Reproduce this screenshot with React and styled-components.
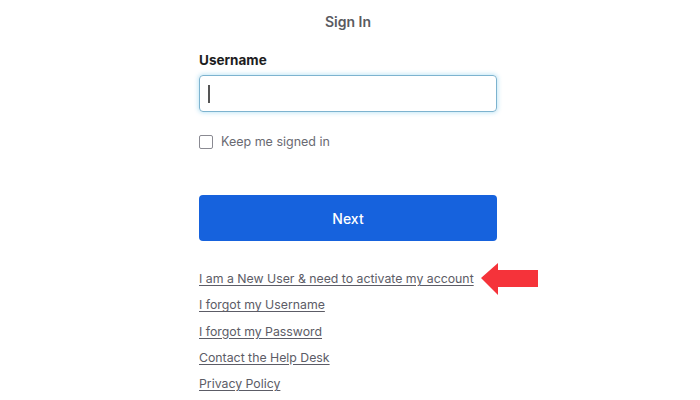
import React from "react";
import styled, { createGlobalStyle } from "styled-components";

const Global = createGlobalStyle`
  html, body { margin: 0; padding: 0; background: #fff; }
  body { font-family: Inter, "Noto Sans", Arial, sans-serif; width: 700px; height: 400px; overflow: hidden; }
`;

const Page = styled.div`
  display: flex;
  justify-content: center;
  padding-right: 4px;
`;

const Form = styled.div`
  width: 298px;
  display: flex;
  flex-direction: column;
`;

const Title = styled.h1`
  margin: 13px 0 0;
  font-size: 14px;
  font-weight: 600;
  color: #5a5a60;
  text-align: center;
  line-height: 18px;
`;

const Label = styled.label`
  margin-top: 21px;
  font-size: 13.5px;
  font-weight: 700;
  color: #1d1d21;
  line-height: 17px;
`;

const InputBox = styled.div`
  margin-top: 6px;
  height: 37px;
  box-sizing: border-box;
  border: 1px solid #7db3cf;
  border-radius: 4px;
  box-shadow: 0 0 4px 1px rgba(120, 200, 235, 0.45);
  display: flex;
  align-items: center;
  padding-left: 8px;
`;

const Caret = styled.span`
  width: 1.5px;
  height: 18px;
  background: #555;
`;

const CheckRow = styled.div`
  margin-top: 22px;
  display: flex;
  align-items: center;
  gap: 8px;
`;

const Box = styled.span`
  width: 14px;
  height: 14px;
  box-sizing: border-box;
  border: 1px solid #8a8a92;
  border-radius: 2px;
`;

const CheckText = styled.span`
  font-size: 12.5px;
  color: #6a6a72;
`;

const Button = styled.button`
  margin-top: 46px;
  height: 46px;
  border: none;
  border-radius: 4px;
  background: #1662dd;
  color: #fff;
  font-family: inherit;
  font-size: 14px;
  font-weight: 500;
`;

const Links = styled.div`
  margin-top: 29px;
  display: flex;
  flex-direction: column;
  gap: 9.25px;
`;

const LinkRow = styled.div`
  position: relative;
  height: 17px;
  display: flex;
  align-items: center;
`;

const Link = styled.a`
  font-size: 12.3px;
  color: #5c5c66;
  text-decoration: underline;
  text-underline-offset: 2px;
  line-height: 17px;
`;

const Arrow = styled.svg`
  position: absolute;
  left: 282px;
  top: -7px;
`;

export default function App() {
  const links = [
    "I forgot my Username",
    "I forgot my Password",
    "Contact the Help Desk",
    "Privacy Policy",
  ];
  return (
    <>
      <Global />
      <Page>
        <Form>
          <Title>Sign In</Title>
          <Label>Username</Label>
          <InputBox>
            <Caret />
          </InputBox>
          <CheckRow>
            <Box />
            <CheckText>Keep me signed in</CheckText>
          </CheckRow>
          <Button>Next</Button>
          <Links>
            <LinkRow>
              <Link>I am a New User &amp; need to activate my account</Link>
              <Arrow width="58" height="33" viewBox="0 0 58 33">
                <polygon points="0,15 17,0 17,7 57,7 57,24 17,24 17,32" fill="#f5333a" />
              </Arrow>
            </LinkRow>
            {links.map((l) => (
              <LinkRow key={l}>
                <Link>{l}</Link>
              </LinkRow>
            ))}
          </Links>
        </Form>
      </Page>
    </>
  );
}
